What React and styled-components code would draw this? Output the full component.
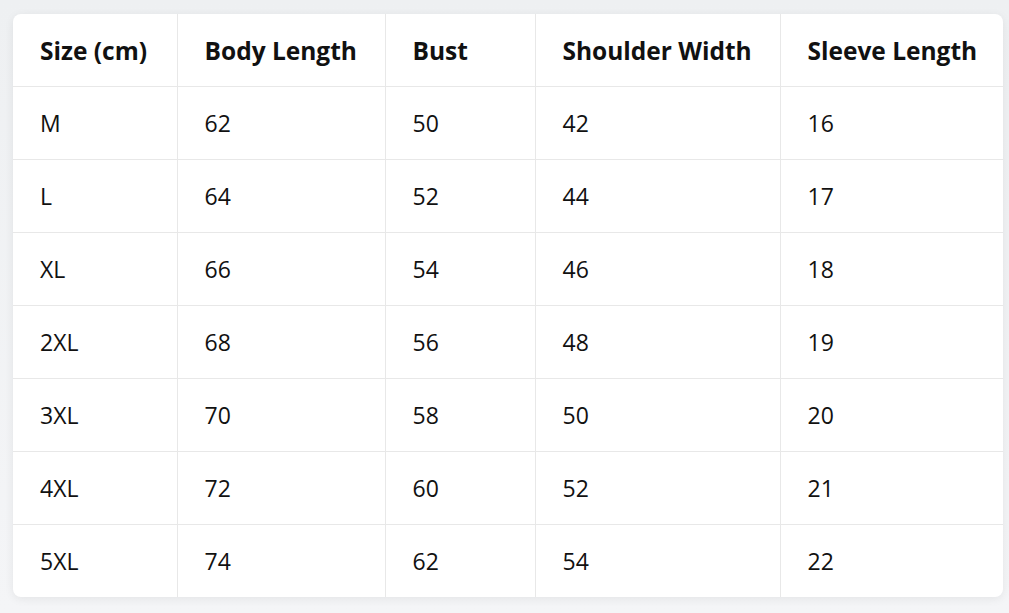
import React from "react";
import styled, { createGlobalStyle } from "styled-components";

const Global = createGlobalStyle`
  html, body { margin: 0; padding: 0; }
  body {
    background: #f2f3f5;
    font-family: "Open Sans", "Noto Sans", sans-serif;
    color: #111;
  }
`;

const Page = styled.div`
  padding: 14px 6px 16px 13px;
  min-height: 613px;
  box-sizing: border-box;
  background: linear-gradient(180deg, #eef0f2 0%, #f4f5f7 100%);
`;

const Card = styled.div`
  background: #fff;
  border-radius: 8px;
  box-shadow: 0 2px 10px rgba(0, 0, 0, 0.07);
  overflow: hidden;
  width: 990px;
`;

const Table = styled.table`
  width: 100%;
  border-collapse: collapse;
  table-layout: fixed;
`;

const Th = styled.th`
  height: 72px;
  padding: 0 0 0 27px;
  text-align: left;
  font-weight: 700;
  font-size: 24.5px;
  color: #111;
  white-space: nowrap;
  border-bottom: 1px solid #e8e8e8;
  border-left: ${(p) => (p.$first ? "none" : "1px solid #e8e8e8")};
`;

const Td = styled.td`
  height: 72px;
  padding: 0 0 0 27px;
  font-size: 23px;
  color: #111;
  border-top: 1px solid #e8e8e8;
  border-left: ${(p) => (p.$first ? "none" : "1px solid #e8e8e8")};
`;

const widths = [164, 208, 150, 245, 223];
const headers = ["Size (cm)", "Body Length", "Bust", "Shoulder Width", "Sleeve Length"];
const rows = [
  ["M", 62, 50, 42, 16],
  ["L", 64, 52, 44, 17],
  ["XL", 66, 54, 46, 18],
  ["2XL", 68, 56, 48, 19],
  ["3XL", 70, 58, 50, 20],
  ["4XL", 72, 60, 52, 21],
  ["5XL", 74, 62, 54, 22],
];

export default function App() {
  return (
    <>
      <Global />
      <Page>
        <Card>
          <Table>
            <colgroup>
              {widths.map((w, i) => (
                <col key={i} style={{ width: w }} />
              ))}
            </colgroup>
            <thead>
              <tr>
                {headers.map((h, i) => (
                  <Th key={h} $first={i === 0}>{h}</Th>
                ))}
              </tr>
            </thead>
            <tbody>
              {rows.map((r) => (
                <tr key={r[0]}>
                  {r.map((c, i) => (
                    <Td key={i} $first={i === 0}>{c}</Td>
                  ))}
                </tr>
              ))}
            </tbody>
          </Table>
        </Card>
      </Page>
    </>
  );
}
